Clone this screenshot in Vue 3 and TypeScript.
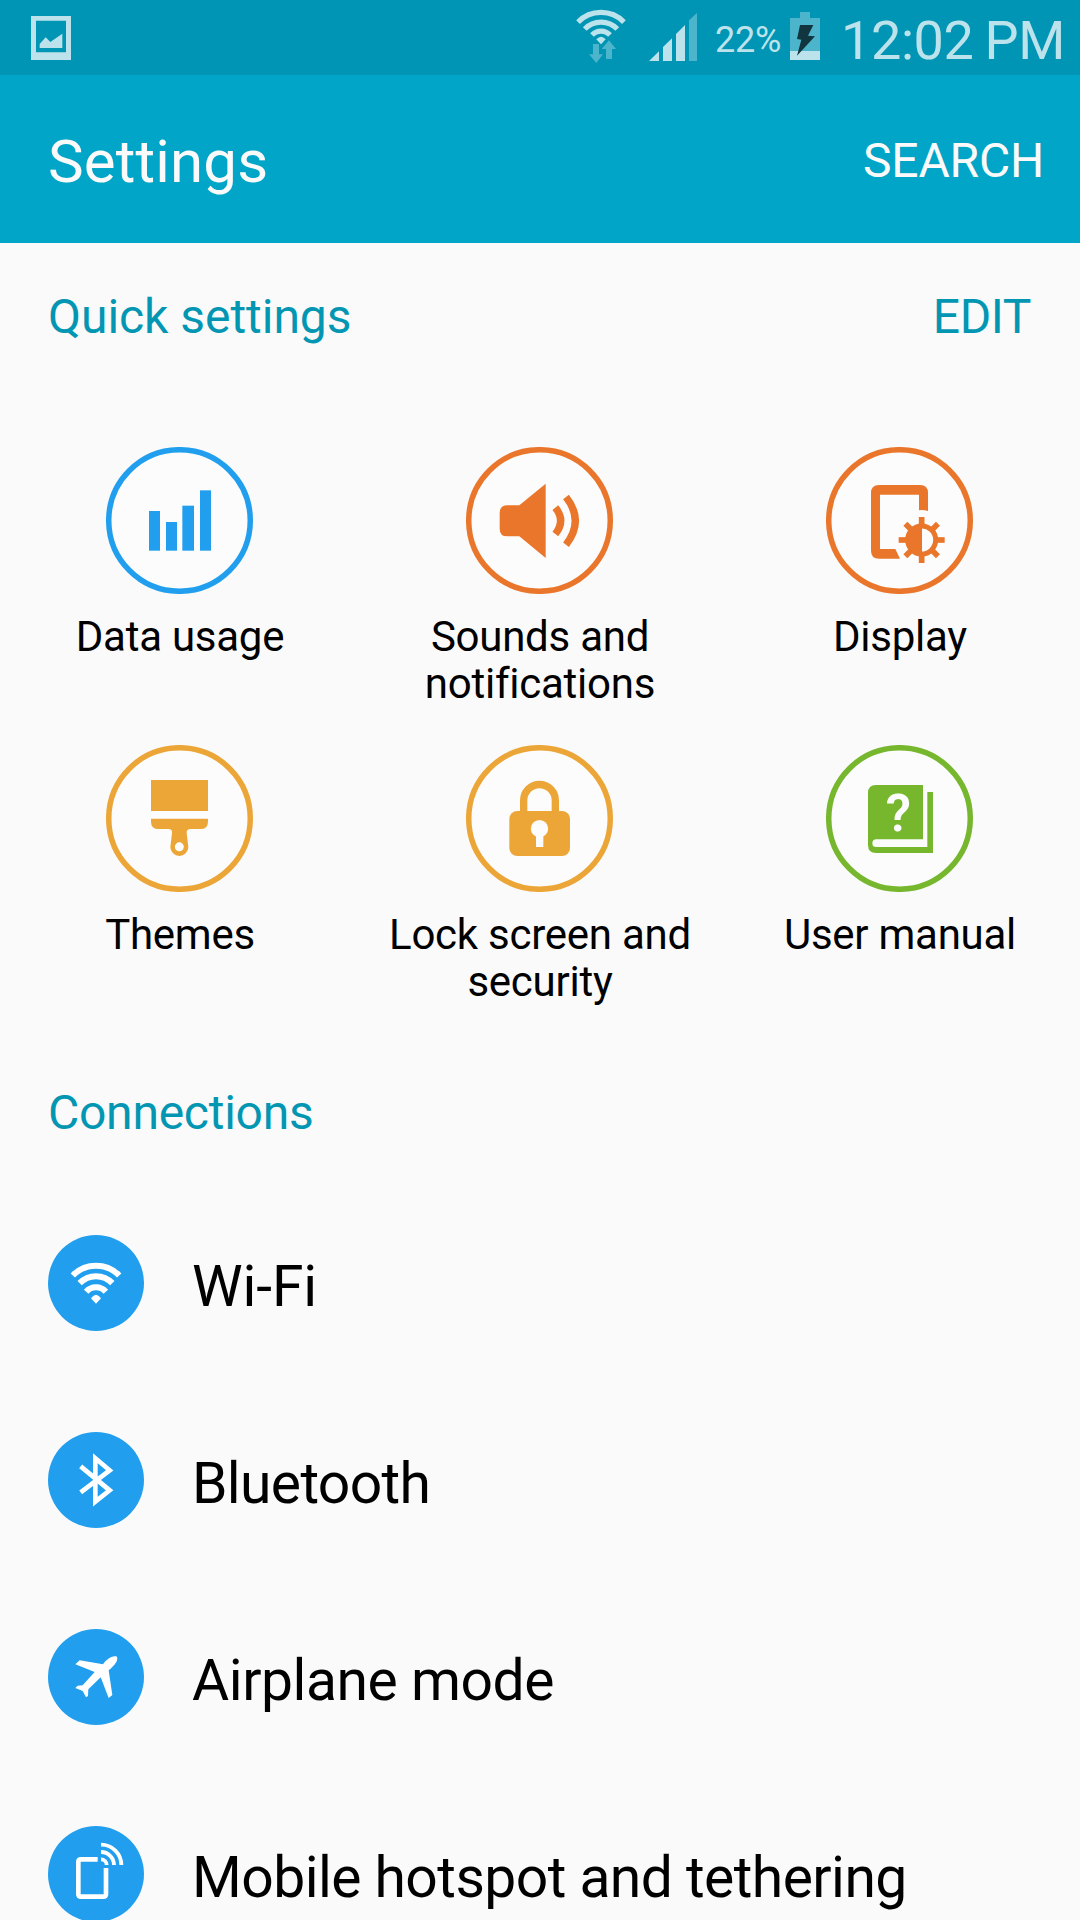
<script setup lang="ts">
interface QuickItem {
  id: string
  lines: string[]
  color: string
  viewBox: string
  cx: number
  cy: number
}

interface Connection {
  id: string
  label: string
  tracking: number
  viewBox: string
}

const quickItems: QuickItem[] = [
  { id: 'data', lines: ['Data usage'], color: '#219fee', viewBox: '48 51 444 441', cx: 268.5, cy: 271.5 },
  { id: 'sound', lines: ['Sounds and', 'notifications'], color: '#e9762b', viewBox: '138 51 444 441', cx: 358.5, cy: 271.5 },
  { id: 'display', lines: ['Display'], color: '#e9762b', viewBox: '138 51 444 441', cx: 358.5, cy: 271.5 },
  { id: 'themes', lines: ['Themes'], color: '#eca637', viewBox: '48 30 444 441', cx: 268.5, cy: 250.5 },
  { id: 'lock', lines: ['Lock screen and', 'security'], color: '#eca637', viewBox: '258 30 444 441', cx: 478.5, cy: 250.5 },
  { id: 'manual', lines: ['User manual'], color: '#76b72d', viewBox: '138 30 444 441', cx: 358.5, cy: 250.5 },
]

const connections: Connection[] = [
  { id: 'wifi', label: 'Wi-Fi', tracking: -0.1, viewBox: '54 75 288 288' },
  { id: 'bluetooth', label: 'Bluetooth', tracking: -0.65, viewBox: '54 666 288 288' },
  { id: 'airplane', label: 'Airplane mode', tracking: -0.45, viewBox: '54 87 288 288' },
  { id: 'hotspot', label: 'Mobile hotspot and tethering', tracking: -0.55, viewBox: '54 678 288 288' },
]

const teeth: number[] = [0, 45, 90, 135, 180, 225, 270, 315]
</script>

<template>
  <div class="screen">
    <div class="status">
      <svg class="st-photo" width="40" height="44" viewBox="93 48 120 132">
        <path fill="#bce3eb" fill-rule="evenodd" d="M93 48H213V180H93ZM108 62V157H198V62Z" />
        <path fill="#bce3eb" d="M119 132L137 112L151 126L187 101V144H119Z" />
      </svg>
      <svg class="st-wifi" width="50" height="54" viewBox="48 27 150 162">
        <g fill="none" stroke="#bce3eb" stroke-width="15.5">
          <path d="M54.2 66.2A96.5 96.5 0 0 1 191.800 66.2" />
          <path d="M74.200 86.9A68 68 0 0 1 171.800 86.9" />
          <path d="M96 105A37 37 0 0 1 150 105" />
        </g>
        <path fill="#bce3eb" d="M109 118Q123 102 137 118L123 133Z" />
        <path fill="#4db5cb" d="M99 132H117V163H129L109 189L87 163H99Z" />
        <path fill="#4db5cb" d="M138 177V147H125L147 121L168 147H156V177Z" />
      </svg>
      <svg class="st-signal" width="48" height="48" viewBox="267 39 144 144">
        <path fill="#bce3eb" d="M267 183L297 154V183ZM309 141L336 115V183H309ZM348 102L375 75V183H348Z" />
        <path fill="#4db5cb" d="M387 61L411 39V183H387Z" />
      </svg>
      <span class="st-percent">22%</span>
      <svg class="st-battery" width="30" height="48" viewBox="690 36 90 144">
        <path fill="#4db5cb" d="M720 36H750V54H780V153H690V54H720Z" />
        <path fill="#bce3eb" d="M690 153H780V180H690Z" />
        <path fill="#12363f" d="M720 75H760L744 107L765 109L711 167L724 119L711 117Z" />
      </svg>
      <span class="st-clock">12:02 PM</span>
    </div>

    <header class="bar">
      <h1 class="title">Settings</h1>
      <span class="search">SEARCH</span>
    </header>

    <div class="section-head first">
      <h2 class="section-title">Quick settings</h2>
      <span class="edit">EDIT</span>
    </div>

    <div class="grid">
      <div v-for="item in quickItems" :key="item.id" class="cell">
        <svg width="148" height="147" :viewBox="item.viewBox" :style="{ color: item.color }">
          <circle :cx="item.cx" :cy="item.cy" r="212.3" fill="#fcfcfc" stroke="currentColor" stroke-width="16.5" />
          <g v-if="item.id === 'data'" fill="currentColor">
            <rect x="177" y="243" width="33" height="119" />
            <rect x="228" y="276" width="33" height="86" />
            <rect x="277" y="227" width="35" height="135" />
            <rect x="330" y="181" width="33" height="181" />
          </g>
          <g v-else-if="item.id === 'sound'">
            <path fill="currentColor" d="M262 226H298L377 161V384L298 319H262Q239 319 239 296V249Q239 226 262 226Z" />
            <path fill="none" stroke="currentColor" stroke-width="22" d="M406 233Q438 272 406 312M438 201Q494 272 438 344" />
          </g>
          <g v-else-if="item.id === 'display'">
            <path fill="currentColor" d="M297 165H420Q444 165 444 189V243Q430 239 417 241V194H300V357H346L360 386H297Q273 386 273 362V189Q273 165 297 165Z" />
            <circle cx="425" cy="330" r="42" fill="none" stroke="currentColor" stroke-width="15" />
            <path fill="currentColor" d="M426 286V374A44 44 0 0 1 426 286Z" />
            <rect v-for="angle in teeth" :key="angle" x="416.5" y="261" width="17" height="24" fill="currentColor" :transform="`rotate(${angle} 425 330)`" />
          </g>
          <g v-else-if="item.id === 'themes'" fill="currentColor">
            <rect x="183" y="135" width="171" height="93" />
            <path fill-rule="evenodd" d="M183 251H354V260Q354 282 332 282H302Q289 282 290 294L295 336A27 27 0 0 1 241 336L246 294Q247 282 235 282H205Q183 282 183 260ZM268 322A13.500 13.500 0 1 0 268 349A13.500 13.500 0 1 0 268 322Z" />
          </g>
          <g v-else-if="item.id === 'lock'">
            <path fill="none" stroke="currentColor" stroke-width="22" d="M431 232V196A47.500 47.500 0 0 1 526 196V232" />
            <rect x="388" y="228" width="182" height="135" rx="24" fill="currentColor" />
            <circle cx="478.500" cy="281" r="26" fill="#fcfcfc" />
            <rect x="468" y="296" width="22" height="40" fill="#fcfcfc" />
          </g>
          <g v-else>
            <path fill="currentColor" d="M288 150H429V313H289Q277 313 277 324.500Q277 336 289 336H442V171H459V354H288Q264 354 264 330V174Q264 150 288 150Z" />
            <text x="355" y="288" class="mark">?</text>
          </g>
        </svg>
        <div class="cell-label">
          <div v-for="line in item.lines" :key="line">{{ line }}</div>
        </div>
      </div>
    </div>

    <div class="section-head second">
      <h2 class="section-title">Connections</h2>
    </div>

    <div class="list">
      <div v-for="row in connections" :key="row.id" class="row">
        <svg class="row-icon" width="96" height="96" :viewBox="row.viewBox">
          <g v-if="row.id === 'wifi'" fill="none" stroke="#fff" stroke-width="18">
            <path d="M128.400 196.400A97 97 0 0 1 267.600 196.400" />
            <path d="M149 219.500A67.500 67.500 0 0 1 247 219.500" />
            <path d="M168.500 245A39 39 0 0 1 227.500 245" />
            <path d="M183 265Q198 244 213 265L198 281Z" fill="#fff" stroke="none" />
          </g>
          <path v-else-if="row.id === 'bluetooth'" fill="none" stroke="#fff" stroke-width="14" stroke-miterlimit="10" d="M152 769L239 841L196 875V745L239 781L152 847" />
          <path v-else-if="row.id === 'airplane'" fill="#fff" d="M261 170C248 164 229 177 219 193L149 181L136 193L194 216L158 256L143 257L136 264L158 273L168 292L174 288L175 268L212 232L236 294L247 285L236 211C255 195 265 182 261 170Z" />
          <g v-else fill="none" stroke="#fff">
            <path stroke-width="14" d="M203 778H153Q145 778 145 786V882Q145 890 153 890H220Q228 890 228 882V804" />
            <path stroke-width="11.500" d="M213 734A61 61 0 0 1 274 795M213 756A39 39 0 0 1 252 795M213 778A17 17 0 0 1 230 795" />
          </g>
        </svg>
        <span class="row-label" :style="{ letterSpacing: row.tracking + 'px' }">{{ row.label }}</span>
      </div>
    </div>
  </div>
</template>

<style>
html,
body {
  margin: 0;
  background: #fafafa;
}
</style>

<style scoped>
.screen {
  width: 1080px;
  height: 1920px;
  overflow: hidden;
  background: #fafafa;
  color: #000;
  font-family: Roboto, "Liberation Sans", sans-serif;
}
svg {
  display: block;
  flex: none;
}
h1,
h2 {
  margin: 0;
  font-weight: 400;
}
.status {
  display: flex;
  align-items: flex-start;
  box-sizing: border-box;
  height: 75px;
  padding-right: 16px;
  background: #0095b4;
  color: #bce3eb;
  white-space: nowrap;
}
.st-photo {
  margin: 16px auto 0 31px;
}
.st-wifi {
  margin-top: 9px;
}
.st-signal {
  margin: 13px 0 0 23px;
}
.st-percent {
  width: 93px;
  box-sizing: border-box;
  padding-left: 18px;
  margin-top: 4px;
  font-size: 36px;
  line-height: 72px;
  letter-spacing: -0.2px;
}
.st-battery {
  margin-top: 12px;
}
.st-clock {
  width: 244px;
  box-sizing: border-box;
  padding-left: 21px;
  margin-top: 5px;
  font-size: 54px;
  line-height: 72px;
  letter-spacing: -0.4px;
  word-spacing: -2px;
}
.bar {
  display: flex;
  justify-content: space-between;
  align-items: center;
  box-sizing: border-box;
  height: 168px;
  padding: 0 36px 0 48px;
  background: #00a5c7;
  color: #fafafa;
}
.title {
  padding-top: 5px;
  font-size: 60px;
  line-height: 70px;
  letter-spacing: 0.15px;
}
.search {
  padding-top: 3px;
  font-size: 48px;
  line-height: 60px;
  letter-spacing: -0.2px;
}
.section-head {
  display: flex;
  justify-content: space-between;
  box-sizing: border-box;
  padding: 0 49px 0 48px;
  color: #0396b3;
  font-size: 48px;
  line-height: 56px;
}
.section-title {
  font-size: 48px;
}
.edit {
  letter-spacing: -0.4px;
}
.first {
  height: 204px;
  padding-top: 46px;
}
.first .section-title {
  letter-spacing: -0.04px;
}
.second {
  height: 141px;
  padding-top: 42px;
}
.second .section-title {
  letter-spacing: -0.25px;
}
.grid {
  display: grid;
  grid-template-columns: repeat(3, 360px);
  grid-auto-rows: 298px;
}
.cell {
  display: flex;
  flex-direction: column;
  align-items: center;
}
.cell-label {
  margin-top: 19px;
  font-size: 42px;
  line-height: 47px;
  letter-spacing: -0.25px;
  text-align: center;
  white-space: nowrap;
}
.mark {
  fill: #fcfcfc;
  font-size: 154px;
  font-weight: 600;
  text-anchor: middle;
}
.row {
  display: flex;
  align-items: center;
  height: 197px;
}
.row-icon {
  margin-left: 48px;
  border-radius: 50%;
  background: #219fee;
}
.row-label {
  margin-left: 48px;
  padding-top: 8px;
  font-size: 57px;
  line-height: 70px;
  white-space: nowrap;
}
</style>
